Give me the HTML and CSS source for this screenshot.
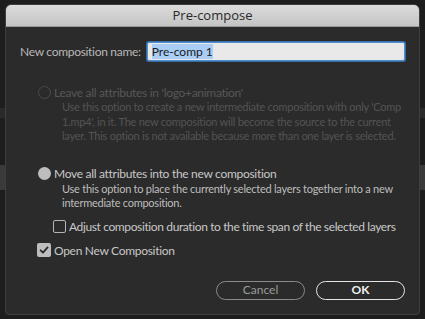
FILE: index.html
```html
<!DOCTYPE html>
<html>
<head>
<meta charset="utf-8">
<link rel="stylesheet" href="styles.css">
</head>
<body>
<div class="desk">
  <div class="dialog">
    <div class="titlebar">Pre-compose</div>
    <div class="content">
      <div class="namerow">
        <span class="label">New composition name:</span>
        <div class="input"><span class="sel">Pre-comp 1</span></div>
      </div>
      <div class="option disabled">
        <div class="optrow"><span class="radio"></span><span>Leave all attributes in 'logo+animation'</span></div>
        <div class="desc">Use this option to create a new intermediate composition with only 'Comp 1.mp4', in it. The new composition will become the source to the current layer. This option is not available because more than one layer is selected.</div>
      </div>
      <div class="option active">
        <div class="optrow"><span class="radio on"></span><span>Move all attributes into the new composition</span></div>
        <div class="desc">Use this option to place the currently selected layers together into a new intermediate composition.</div>
        <div class="check sub"><span class="box"></span><span>Adjust composition duration to the time span of the selected layers</span></div>
      </div>
      <div class="check main"><span class="box checked"><svg viewBox="0 0 12 12" width="12" height="12"><path d="M2.6 6.3 L5 8.7 L9.6 3.4" fill="none" stroke="#2b2b2b" stroke-width="1.8" stroke-linecap="round" stroke-linejoin="round"/></svg></span><span>Open New Composition</span></div>
      <div class="buttons">
        <div class="btn cancel">Cancel</div>
        <div class="btn ok">OK</div>
      </div>
    </div>
  </div>
</div>
</body>
</html>
```
FILE: styles.css
```css
html, body {
  margin: 0;
  padding: 0;
}
body {
  width: 425px;
  height: 319px;
  overflow: hidden;
  background: #1c1c1c;
  font-family: "Lato", "Open Sans", sans-serif;
}
.desk {
  height: 319px;
  padding: 4px 5px 0 5px;
  box-sizing: border-box;
  background:
    linear-gradient(to bottom, transparent 108px, #2a2a2a 108px, #2a2a2a 118px, transparent 118px, transparent 165px, #3a3a3a 165px, #3a3a3a 190px, transparent 190px),
    #1d1d1d;
}
.dialog {
  width: 415px;
  height: 311px;
  box-sizing: border-box;
  border: 1px solid #3e3e3e;
  border-radius: 6px 6px 4px 4px;
  background: #2b2b2b;
  overflow: hidden;
  display: flex;
  flex-direction: column;
}
.titlebar {
  height: 21px;
  flex: none;
  background: linear-gradient(#dcdcdc, #c4c4c4);
  border-bottom: 1px solid #9a9a9a;
  color: #2a2a2a;
  font-family: "Open Sans", sans-serif;
  font-size: 13px;
  line-height: 21px;
  text-align: center;
}
.content {
  flex: 1;
  display: flex;
  flex-direction: column;
  padding: 15px 14px 14px 14px;
  letter-spacing: -0.3px;
}
.namerow {
  display: flex;
  align-items: center;
  gap: 6px;
}
.label {
  color: #b8b8b8;
  font-size: 12px;
}
.input {
  flex: 1;
  height: 19px;
  box-sizing: border-box;
  background: #e9e9e9;
  border: 1px solid #4d8fd0;
  box-shadow: 0 0 0 1px #3a6fa5;
  border-radius: 2px;
  padding-left: 4px;
  display: flex;
  align-items: center;
  font-size: 12px;
  color: #1a1a1a;
  letter-spacing: 0;
}
.sel {
  background: #a9cdf5;
  line-height: 15px;
}
.option {
  padding-left: 18px;
  font-size: 12px;
}
.option.disabled {
  margin-top: 24px;
  color: #575757;
}
.option.active {
  margin-top: 23px;
  color: #c8c8c8;
}
.optrow {
  display: flex;
  align-items: center;
  gap: 3px;
  height: 14px;
}
.radio {
  width: 13px;
  height: 13px;
  border-radius: 50%;
  border: 1.5px solid #4a4a4a;
  box-sizing: border-box;
  flex: none;
}
.radio.on {
  border: none;
  background: #bdbdbd;
}
.desc {
  padding-left: 24px;
  font-size: 11px;
  line-height: 14.5px;
  margin-top: 1px;
  letter-spacing: -0.25px;
}
.disabled .desc {
  color: #545454;
}
.active .desc {
  color: #bdbdbd;
}
.check {
  display: flex;
  align-items: center;
  gap: 3px;
  font-size: 12px;
  color: #c8c8c8;
}
.check.sub {
  margin-top: 8px;
  padding-left: 15px;
  letter-spacing: -0.38px;
}
.check.main {
  margin-top: 9px;
  padding-left: 17px;
}
.box {
  width: 13px;
  height: 13px;
  box-sizing: border-box;
  border: 1.5px solid #b5b5b5;
  border-radius: 2px;
  display: flex;
  align-items: center;
  justify-content: center;
  flex: none;
}
.box.checked {
  background: #bdbdbd;
  border: none;
  width: 14px;
  height: 14px;
}
.buttons {
  display: flex;
  justify-content: flex-end;
  gap: 11px;
  margin-top: auto;
}
.btn {
  width: 89px;
  height: 19px;
  box-sizing: border-box;
  border-radius: 10px;
  font-size: 12px;
  line-height: 16px;
  text-align: center;
  letter-spacing: 0;
}
.btn.cancel {
  border: 1.5px solid #8a8a8a;
  color: #9a9a9a;
}
.btn.ok {
  border: 1.5px solid #e6e6e6;
  color: #f0f0f0;
  font-weight: bold;
}
```
